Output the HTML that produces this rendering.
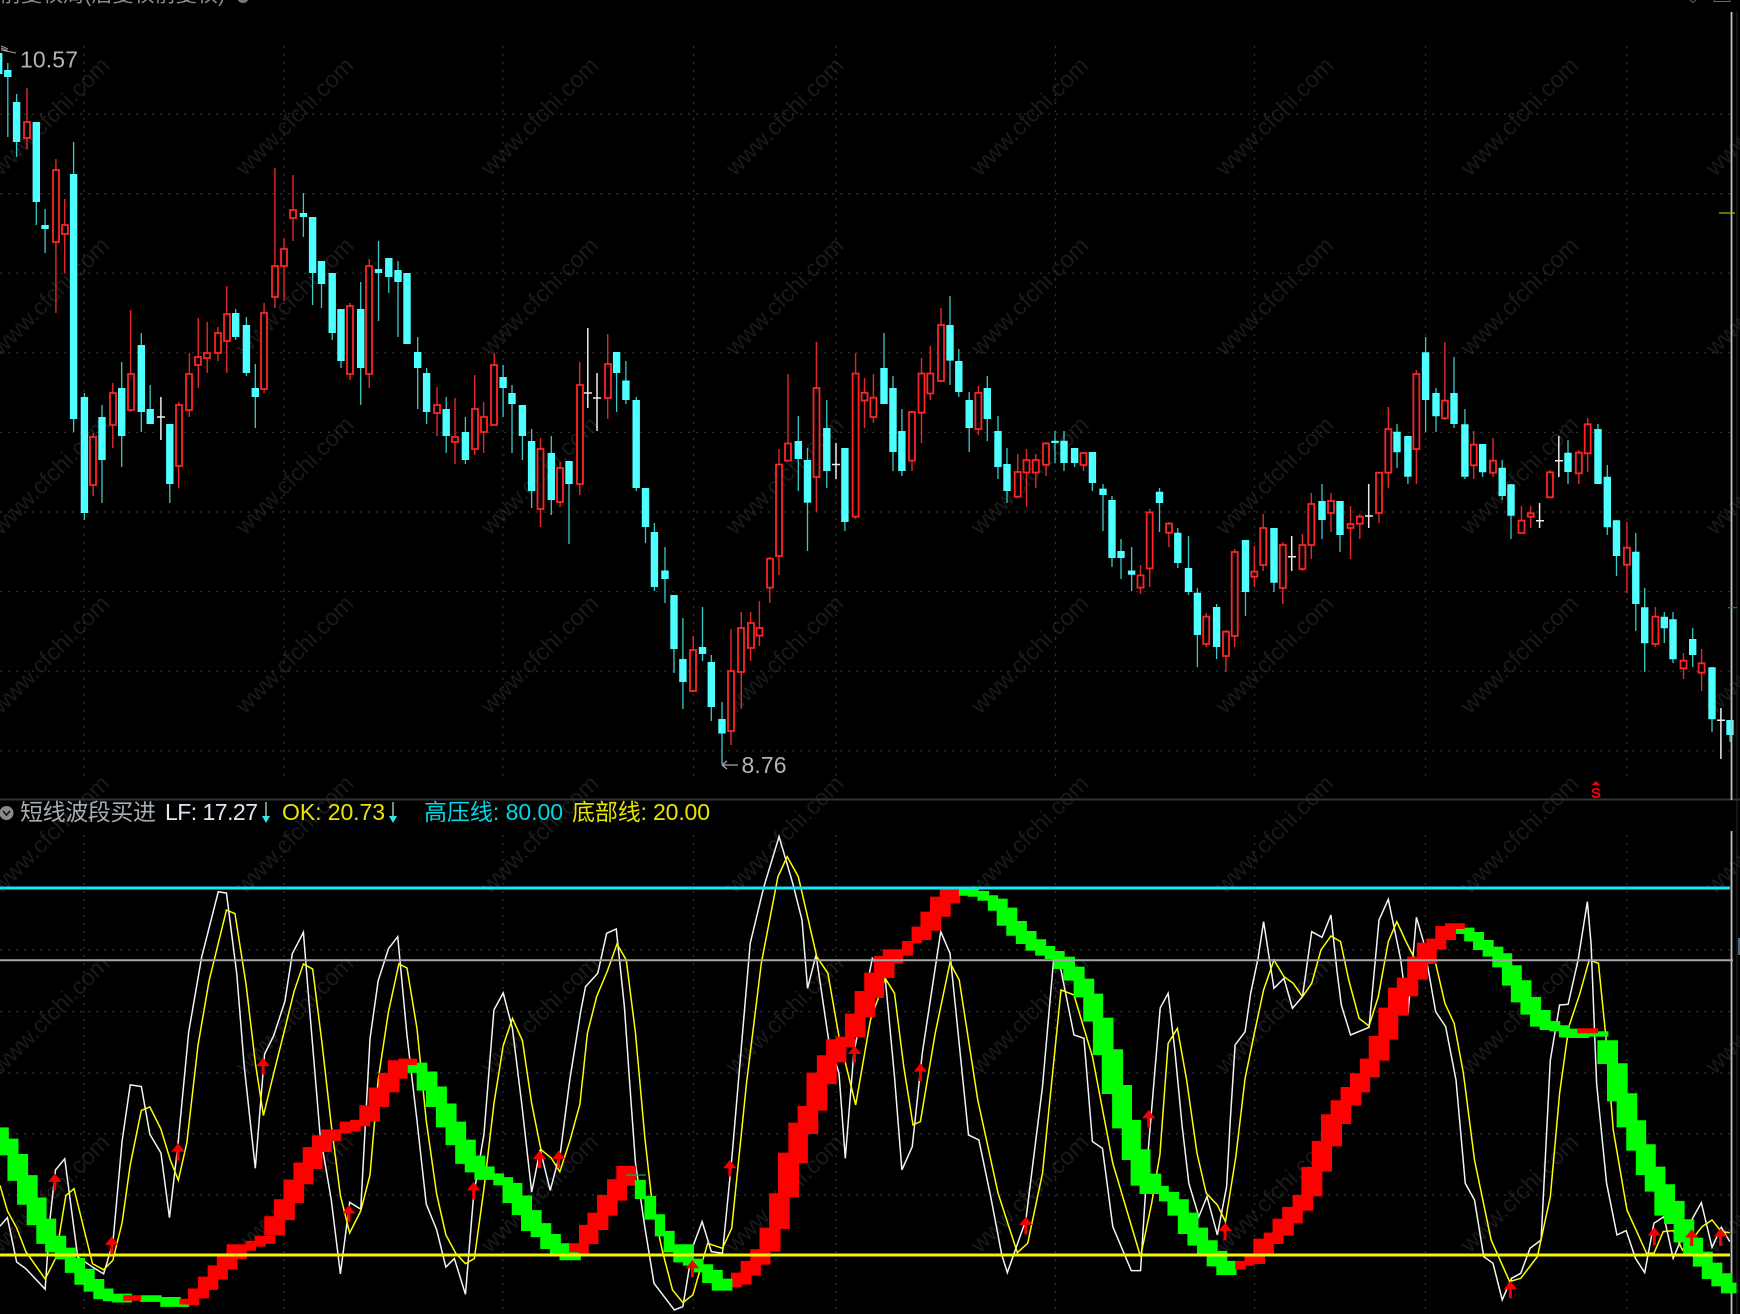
<!DOCTYPE html>
<html lang="zh"><head><meta charset="utf-8"><title>短线波段买进</title>
<style>html,body{margin:0;padding:0;background:#000;width:1740px;height:1314px;overflow:hidden}svg{display:block;filter:blur(.25px)}
.t{font-family:"Liberation Sans","Noto Sans CJK SC",sans-serif;font-size:23px}
.w text{font-family:"Liberation Sans",sans-serif;font-size:23.5px;fill:#1a1a1a;text-anchor:middle}
.l{fill:none;stroke-width:1.5;vector-effect:non-scaling-stroke;stroke-linejoin:miter}
.g{fill:#00ff00;stroke:#00ff00;stroke-width:1.4;vector-effect:non-scaling-stroke}
.r{fill:#ff0000;stroke:#ff0000;stroke-width:1.4;vector-effect:non-scaling-stroke}
</style></head><body>
<svg width="1740" height="1314" viewBox="0 0 1740 1314" xmlns="http://www.w3.org/2000/svg">
<rect width="1740" height="1314" fill="#000"/>
<!-- watermarks -->
<g class="w" transform="translate(4 4)">
<text transform="translate(52 118) rotate(-45)">www.cfchi.com</text><text transform="translate(296 118) rotate(-45)">www.cfchi.com</text><text transform="translate(541 118) rotate(-45)">www.cfchi.com</text><text transform="translate(786 118) rotate(-45)">www.cfchi.com</text><text transform="translate(1031 118) rotate(-45)">www.cfchi.com</text><text transform="translate(1276 118) rotate(-45)">www.cfchi.com</text><text transform="translate(1521 118) rotate(-45)">www.cfchi.com</text><text transform="translate(1766 118) rotate(-45)">www.cfchi.com</text>
<text transform="translate(52 298) rotate(-45)">www.cfchi.com</text><text transform="translate(296 298) rotate(-45)">www.cfchi.com</text><text transform="translate(541 298) rotate(-45)">www.cfchi.com</text><text transform="translate(786 298) rotate(-45)">www.cfchi.com</text><text transform="translate(1031 298) rotate(-45)">www.cfchi.com</text><text transform="translate(1276 298) rotate(-45)">www.cfchi.com</text><text transform="translate(1521 298) rotate(-45)">www.cfchi.com</text><text transform="translate(1766 298) rotate(-45)">www.cfchi.com</text>
<text transform="translate(52 477) rotate(-45)">www.cfchi.com</text><text transform="translate(296 477) rotate(-45)">www.cfchi.com</text><text transform="translate(541 477) rotate(-45)">www.cfchi.com</text><text transform="translate(786 477) rotate(-45)">www.cfchi.com</text><text transform="translate(1031 477) rotate(-45)">www.cfchi.com</text><text transform="translate(1276 477) rotate(-45)">www.cfchi.com</text><text transform="translate(1521 477) rotate(-45)">www.cfchi.com</text><text transform="translate(1766 477) rotate(-45)">www.cfchi.com</text>
<text transform="translate(52 656) rotate(-45)">www.cfchi.com</text><text transform="translate(296 656) rotate(-45)">www.cfchi.com</text><text transform="translate(541 656) rotate(-45)">www.cfchi.com</text><text transform="translate(786 656) rotate(-45)">www.cfchi.com</text><text transform="translate(1031 656) rotate(-45)">www.cfchi.com</text><text transform="translate(1276 656) rotate(-45)">www.cfchi.com</text><text transform="translate(1521 656) rotate(-45)">www.cfchi.com</text><text transform="translate(1766 656) rotate(-45)">www.cfchi.com</text>
<text transform="translate(52 836) rotate(-45)">www.cfchi.com</text><text transform="translate(296 836) rotate(-45)">www.cfchi.com</text><text transform="translate(541 836) rotate(-45)">www.cfchi.com</text><text transform="translate(786 836) rotate(-45)">www.cfchi.com</text><text transform="translate(1031 836) rotate(-45)">www.cfchi.com</text><text transform="translate(1276 836) rotate(-45)">www.cfchi.com</text><text transform="translate(1521 836) rotate(-45)">www.cfchi.com</text><text transform="translate(1766 836) rotate(-45)">www.cfchi.com</text>
<text transform="translate(52 1016) rotate(-45)">www.cfchi.com</text><text transform="translate(296 1016) rotate(-45)">www.cfchi.com</text><text transform="translate(541 1016) rotate(-45)">www.cfchi.com</text><text transform="translate(786 1016) rotate(-45)">www.cfchi.com</text><text transform="translate(1031 1016) rotate(-45)">www.cfchi.com</text><text transform="translate(1276 1016) rotate(-45)">www.cfchi.com</text><text transform="translate(1521 1016) rotate(-45)">www.cfchi.com</text><text transform="translate(1766 1016) rotate(-45)">www.cfchi.com</text>
<text transform="translate(52 1195) rotate(-45)">www.cfchi.com</text><text transform="translate(296 1195) rotate(-45)">www.cfchi.com</text><text transform="translate(541 1195) rotate(-45)">www.cfchi.com</text><text transform="translate(786 1195) rotate(-45)">www.cfchi.com</text><text transform="translate(1031 1195) rotate(-45)">www.cfchi.com</text><text transform="translate(1276 1195) rotate(-45)">www.cfchi.com</text><text transform="translate(1521 1195) rotate(-45)">www.cfchi.com</text><text transform="translate(1766 1195) rotate(-45)">www.cfchi.com</text>
</g>
<!-- grid -->
<g stroke="#323232" stroke-width="1.2" stroke-dasharray="2 6" fill="none">
<path d="M0 114H1731M0 193.6H1731M0 273.2H1731M0 352.8H1731M0 432.4H1731M0 512H1731M0 591.6H1731M0 671.2H1731M0 750.8H1731"/>
<path d="M84 46V780M284 46V780M503 46V780M693.5 46V780M836 46V780M1055.5 46V780M1254.5 46V780M1425.5 46V780M1627 46V780"/>
<path d="M0 950H1731M0 1011.6H1731M0 1073H1731M0 1134H1731M0 1195H1731"/>
<path d="M84 835V1314M284 835V1314M503 835V1314M693.5 835V1314M836 835V1314M1055.5 835V1314M1254.5 835V1314M1425.5 835V1314M1627 835V1314"/>
</g>
<!-- cropped title -->
<text class="t" x="0" y="1.5" fill="#8a8a8a" textLength="225" style="font-size:21px">前复权周(后复权前复权)</text>
<circle cx="243" cy="-3" r="6" fill="#777"/>
<path d="M1690 0l3 2.5 3-2.5" stroke="#666" fill="none"/><path d="M1714 0v1.5h16V0" stroke="#666" fill="none"/>
<!-- candles: cyan wicks -->
<path fill="none" stroke="#3cc8c8" stroke-width="1.3" d="M-1.3 47V60M7.8 63V137M16.6 94V157M36.3 122V225M45.1 209V253M73.6 142V432M84.4 393V520M102 405V503M121.7 362V467M141.3 333V432M150.2 385V424M169.8 424V503M235.7 309V340M246.4 317V376M255.3 364V428M303.4 193V237M312.6 217V305M321.5 261V308M332.2 273V340M341 309V368M360.7 282V405M378.5 241V321M388.8 258V293M398 261V337M417.7 337V409M426.6 368V424M446.2 397V453M465.4 417V464M503.1 365V417M512 385V453M522.4 405V460M531.6 429V508M551.3 436V515M569 461V544M616.6 352V412M625.9 361V404M636.2 397V491M645.5 488V543M654.4 523V591M665 547V603M674 595V673M682.9 618V709M702.5 607V661M711.3 655V721M722 702V764M798.3 416V491M807.5 448V551M826.8 400V488M844.9 448V531M884 333V404M893 376V471M901.9 409V476M950 296V385M958.8 349V397M969.2 392V452M987.3 376V441M998 416V479M1007 448V503M1055 431V463M1064 431V471M1074.6 448V467M1092.4 452V491M1103 484V531M1112 496V567M1121 539V579M1131.6 547V591M1159.5 488V532M1177.8 528V568M1188.5 536V595M1197.4 588V667M1216.6 604V659M1245.5 540V616M1274 528V592M1322 484V539M1340 501V552M1397 424V468M1407.9 436V484M1425.6 337V432M1436 388V432M1454 357V428M1464.9 409V479M1482.6 444V477M1502.2 460V500M1511 484V539M1568 440V484M1598 424V484M1607.3 465V535M1616.5 520V576M1635.8 533V631M1644.7 588V672M1664.3 612V643M1673 612V663M1692.7 628V667M1712 667V732M1730 720V742"/>
<!-- cyan bodies -->
<path fill="none" stroke="#4dffff" stroke-width="7.4" d="M-1.3 53V74M7.8 70V77M16.6 102V142M36.3 122V202M45.1 225V229M73.6 174V419M84.4 397V513M102 417V460M121.7 388V436M141.3 345V412M150.2 409V424M169.8 424V484M235.7 313V337M246.4 325V373M255.3 388V397M303.4 213V217M312.6 217V273M321.5 261V284M332.2 273V333M341 309V361M360.7 309V368M378.5 269V273M388.8 258V277M398 270V282M407 273V344M417.7 352V368M426.6 373V412M446.2 409V436M465.4 432V460M503.1 377V388M512 393V404M522.4 405V436M531.6 441V491M551.3 453V500M569 461V484M616.6 352V373M625.9 380.5V400M636.2 400V488M645.5 488V527M654.4 532V587M665 570.5V579M674 595V649M682.9 659V682M702.5 647V654M711.3 662V707M722 719V733.5M798.3 441V459M807.5 460V502.6M826.8 428V471M844.9 448V522M884 368V404M893 388V452M901.9 431V471M950 325V360.6M958.8 361V392M969.2 400V428M987.3 388V419M998 431V467M1007 464V491M1055 440.7V443M1064 440.7V463M1074.6 448V463M1092.4 452V483M1103 488.6V495M1112 500V558M1121 551V558M1131.6 570.5V574.7M1159.5 491.7V503M1177.8 532.7V563M1188.5 568V592M1197.4 592.7V635M1216.6 607V647M1245.5 540V592M1274 528V582.7M1322 501V520M1340 501V535M1397 431.7V452.3M1407.9 436V476.7M1425.6 352.3V400M1436 393V416.3M1454 393V424M1464.9 424.3V476.7M1482.6 444V472.3M1502.2 467.7V496M1511 484.3V515.7M1568 452.7V472M1598 429V484M1607.3 476.7V527.3M1616.5 520.3V556M1635.8 551.7V604M1644.7 607.3V643.3M1664.3 616.7V628.3M1673 619.3V659.3M1692.7 639V655M1712 667.3V719.3M1730 720V735"/>
<!-- red wicks -->
<path fill="none" stroke="#e02828" stroke-width="1.4" d="M27 88V149M55.9 159V313M64.7 199V273M93.2 433V496M112.8 383V448M130.6 310V412M178.7 402V488M189.4 353V417M198.3 318V388M207.2 322V373M217.9 327V361M226.8 286V373M264.1 303V393M274.9 168V308M284 238V301M293 175V241M350 303V380M369.2 259V388M437 387V436M455 398V464M474.7 375V455M483.6 402V453M494.3 353V425M540.5 438V527M560.1 462V507M579.7 362V495M607.7 334V419M693.2 636V692M731 629V745M741.3 612V709M750.6 612V661M759.4 601V646M769.8 557V603M779 449V575M788 374V461M816.4 342V512M855.6 353V519M864.5 378V428M873.4 374V423M912 411V471M921.5 358V443M930.3 346V400M941 308V382M978.4 386V435M1017.7 454V497M1026.5 449V507M1035.8 454V488M1046 442V476M1083.5 452V471M1140.5 565V594M1149.7 509V587M1168.9 522V547M1206.2 613V647M1225.9 630V672M1234.7 549V647M1254.3 546V587M1263.2 514V571M1282.8 542V604M1302.4 534V571M1311.3 493V559M1331 493V532M1350.5 506V559M1359.8 514V539M1379 473V523M1388.3 407V488M1416.4 370V484M1444.9 342V420M1473.7 431V479M1493 438V477M1521.5 506V533M1530.7 506V528M1550 470V497M1578.8 450V484M1587.7 418V472M1626.9 522V593M1655.4 607V647M1683.5 653V679M1701.6 649V691"/>
<!-- red bodies -->
<path fill="#000" stroke="#ff2424" stroke-width="1.8" d="M24 122h6V138h-6zM53 170h6V242h-6zM62 225h6V234h-6zM90 437h6V485h-6zM110 393h6V425h-6zM128 374h6V410h-6zM176 405h6V466h-6zM186 374h6V410h-6zM195 357h6V365h-6zM204 353h6V358h-6zM215 333h6V353h-6zM224 314h6V341h-6zM261 313h6V389h-6zM272 266h6V297h-6zM281 249h6V266h-6zM290 210h6V218h-6zM347 306h6V374h-6zM366 266h6V374h-6zM434 405h6V413h-6zM452 437h6V442h-6zM472 409h6V449h-6zM481 417h6V432h-6zM491 365h6V425h-6zM537.5 449h6V509h-6zM557 468h6V502h-6zM577 385h6V484h-6zM605 364h6V398h-6zM690 650h6V691h-6zM728 671h6V731h-6zM738 628h6V672h-6zM748 623h6V648h-6zM756.5 628h6V635.6h-6zM767 558.6h6V587.6h-6zM776 464.5h6V556h-6zM785 443.5h6V460.6h-6zM813.5 388h6V477h-6zM852.6 373.5h6V516.6h-6zM861.5 392.8h6V400.5h-6zM870.4 397.7h6V417h-6zM909 412h6V460.6h-6zM918.5 373.5h6V412.7h-6zM927.3 373.5h6V393.5h-6zM938 325h6V381h-6zM975.4 392.8h6V429h-6zM1014.7 472h6V496.7h-6zM1023.5 460h6V472.5h-6zM1032.8 460h6V472.5h-6zM1043 443.5h6V464.8h-6zM1080.5 453h6V465h-6zM1137.5 575.4h6V587.6h-6zM1146.7 512.4h6V568.4h-6zM1166 523.7h6V532.7h-6zM1203.2 616.7h6V644h-6zM1223 631.7h6V656h-6zM1231.7 552h6V636h-6zM1251.3 571.7h6V576.7h-6zM1260.2 528h6V565h-6zM1279.8 545h6V588h-6zM1299.4 545h6V569h-6zM1308.3 504h6V545h-6zM1328 501h6V513h-6zM1347.5 524h6V528h-6zM1356.8 516.7h6V523.7h-6zM1376 472.7h6V513h-6zM1385.3 429h6V472.7h-6zM1413.4 374h6V449h-6zM1441.9 400.7h6V418.3h-6zM1470.7 444.7h6V465.3h-6zM1490 460.7h6V472.7h-6zM1518.5 520.7h6V533h-6zM1527.7 513.3h6V516.7h-6zM1547 472.3h6V497.3h-6zM1575.8 452.7h6V473.3h-6zM1584.7 424.3h6V453.3h-6zM1623.9 547.7h6V564.7h-6zM1652.4 616.7h6V644h-6zM1680.5 660.7h6V668.3h-6zM1698.6 663.3h6V672.7h-6z"/>
<!-- white doji -->
<path fill="none" stroke="#ececec" stroke-width="1.5" d="M160.9 397V440M157 417h8M587.8 328V408M584 393h8M597 373V431M593 398h8M836 443V479M832 464.5h8M1291.7 536V571M1288 556.7h8M1368.7 484V528M1365 516h8M1539.6 503V528M1536 520.7h8M1558.8 436V477M1555 460.7h8M1720.9 708V759M1717 720.3h8"/>
<!-- pane separators / axis -->
<path d="M0 799.5H1740" stroke="#333" stroke-width="2"/>
<path d="M1731.5 12V800M1731.5 831V1314" stroke="#bdbdbd" stroke-width="1.8"/>
<path d="M1737 12V1314" stroke="#2a2a2a" stroke-width="1"/>
<path d="M1719 213H1735" stroke="#b8b800" stroke-width="1.2"/><path d="M1728 607.7H1737" stroke="#1a8a3a" stroke-width="1.2"/>
<rect x="1738" y="938" width="2" height="17" fill="#567"/>
<!-- S marker -->
<path d="M1595.8 781l4 4h-8z" fill="#ff0000"/><text x="1591" y="798" fill="#ff0000" style="font:bold 15px 'Liberation Sans',sans-serif">S</text>
<!-- labels -->
<path d="M1 50L16 53M1 46L8 49M1 48L8 51" stroke="#a0a0a0" stroke-width="1" fill="none"/>
<text class="t" x="20" y="67.5" fill="#adb5bb" textLength="58">10.57</text>
<path d="M722 765H738M722 765l5-4M722 765l5 4" stroke="#a8a8a8" stroke-width="1.3" fill="none"/>
<text class="t" x="741.5" y="773" fill="#adb5bb" textLength="45">8.76</text>
<circle cx="6.5" cy="813" r="7" fill="#8a8a8a"/><path d="M3 811l3.5 4 3.5-4" stroke="#111" stroke-width="1.6" fill="none"/>
<text class="t" x="20" y="820" fill="#a6aeb5" textLength="136">短线波段买进</text>
<text class="t" x="165" y="820" fill="#dfe6ee" textLength="93">LF: 17.27</text>
<path d="M266 802V820" stroke="#b8f0f0" stroke-width="1.2"/><path d="M262 816h8l-4 7z" fill="#2fe8e8"/>
<text class="t" x="282" y="820" fill="#e6e600" textLength="103">OK: 20.73</text>
<path d="M393 802V820" stroke="#b8f0f0" stroke-width="1.2"/><path d="M389 816h8l-4 7z" fill="#2fe8e8"/>
<text class="t" x="424" y="820" fill="#00d8e8" textLength="139">高压线: 80.00</text>
<text class="t" x="572" y="820" fill="#e6e600" textLength="138">底部线: 20.00</text>
<!-- oscillator lines -->
<g transform="translate(0 780) scale(.37 .3406)">
<polyline class="l" stroke="#f4f4f4" points="0,1310 20,1285 45,1415 70,1435 122,1495 135,1290 150,1145 175,1112 210,1400 250,1430 280,1450 305,1360 330,1060 352,895 382,900 405,1040 435,1095 458,1285 480,1080 510,740 545,520 590,328 612,332 640,570 660,840 690,1140 715,805 740,750 770,650 790,510 820,447 835,650 865,1040 895,1230 920,1450 945,1240 975,1260 1000,760 1022,590 1050,495 1075,460 1100,750 1127,1000 1152,1245 1180,1320 1205,1430 1228,1405 1258,1510 1280,1220 1308,1040 1335,675 1360,625 1385,730 1410,950 1437,1210 1460,1085 1487,1205 1515,1090 1540,880 1568,690"/>
<polyline class="l" stroke="#ffff00" points="0,1190 20,1265 45,1315 70,1385 122,1465 150,1405 178,1220 200,1200 250,1420 280,1438 305,1410 330,1300 352,1130 382,970 405,960 435,1025 460,1115 482,1175 505,1065 535,780 565,590 612,382 635,392 665,600 690,830 712,985 740,860 770,730 795,620 820,540 845,555 870,770 895,1010 920,1220 945,1330 975,1265 1000,1160 1022,880 1050,680 1078,540 1100,552 1127,730 1152,1000 1180,1215 1205,1335 1232,1390 1258,1420 1282,1405 1308,1200 1335,950 1360,780 1385,700 1412,765 1437,950 1462,1085 1490,1110 1513,1150 1540,1060 1568,949"/>
</g>
<g transform="translate(580 820) scale(.37 .3333)">
<polyline class="l" stroke="#f4f4f4" points="0,585 15,500 48,460 72,340 98,327 120,560 135,800 150,1030 175,1220 200,1390 255,1470 278,1460 305,1280 330,1205 355,1295 385,1300 410,1020 460,370 497,200 538,50 575,190 600,300 615,505 638,405 672,660 700,760 717,1015 740,700 790,415 825,475 850,770 870,1050 898,980 925,700 975,335 1000,400 1022,640 1050,945 1078,960 1110,1130 1140,1305 1155,1358 1205,1200 1250,800 1280,420 1300,450 1335,645 1362,655 1385,965 1412,985 1440,1220 1490,1352 1515,1352 1535,1000 1568,565"/>
<polyline class="l" stroke="#ffff00" points="0,850 20,640 45,530 75,450 100,372 125,420 150,640 175,950 195,1150 222,1290 250,1410 278,1448 305,1425 345,1270 385,1285 410,1225 450,790 490,430 535,170 560,110 590,170 640,410 670,460 700,650 745,855 785,600 825,475 850,520 875,740 900,915 920,905 960,640 1000,428 1025,480 1075,840 1130,1120 1182,1298 1210,1270 1250,1060 1300,510 1335,525 1385,710 1440,1030 1515,1310 1545,1150 1568,1000"/>
</g>
<g transform="translate(1160 820) scale(.37 .3333)">
<polyline class="l" stroke="#f4f4f4" points="0,565 22,520 40,690 60,920 78,1090 105,1190 127,1130 155,1245 180,1100 190,900 203,675 230,635 245,520 265,415 280,305 308,505 335,475 358,565 385,530 410,335 438,352 462,285 478,450 490,555 515,645 565,622 592,300 617,238 650,415 670,585 693,292 712,365 722,430 745,575 772,620 800,780 825,1090 850,1140 875,1310 900,1330 925,1440 950,1375 975,1360 1000,1285 1030,1260 1055,720 1080,555 1103,553 1130,420 1155,245 1165,370 1180,790 1207,1090 1235,1245 1260,1232 1285,1315 1310,1358 1335,1210 1362,1190 1387,1315 1412,1250 1463,1148 1492,1282 1517,1222 1540,1265"/>
<polyline class="l" stroke="#ffff00" points="0,1000 22,670 47,625 72,780 100,1000 125,1120 155,1155 177,1205 205,1010 230,775 255,640 280,510 308,420 335,470 360,490 385,530 410,490 435,390 462,348 488,365 510,480 538,595 565,618 590,530 617,365 640,305 665,365 690,420 745,430 770,550 795,610 820,760 850,1020 895,1260 945,1385 975,1375 1020,1310 1055,1130 1080,820 1105,620 1135,520 1160,420 1185,430 1205,650 1225,930 1262,1170 1315,1300 1335,1300 1360,1235 1387,1232 1412,1290 1437,1260 1465,1220 1492,1200 1517,1235 1540,1238"/>
</g>
<!-- band -->
<g transform="translate(0 780) scale(.37 .3406)">
<path class="g" d="M-5 1022H22V1100H-5zM22 1055H48V1175H22zM48 1100H74V1245H48zM74 1162H100V1305H74zM100 1228H124V1360H100zM124 1290H150V1385H124zM150 1340H177V1405H150zM177 1375H203V1445H177zM203 1405H228V1480H203zM228 1437H254V1500H228zM254 1467H280V1522H254zM280 1495H305V1528H280zM305 1510H355V1532H305zM380 1515H435V1530H380zM435 1520H487V1545H435zM487 1535H510V1545H487zM1100 832H1128V858H1100zM1128 832H1153V910H1128zM1153 858H1180V958H1153zM1180 902H1206V1018H1180zM1206 952H1232V1070H1206zM1232 1005H1258V1125H1232zM1258 1058H1284V1150H1258zM1284 1105H1310V1172H1284zM1310 1137H1335V1172H1310zM1335 1157H1360V1188H1335zM1360 1168H1385V1240H1360zM1385 1185H1410V1275H1385zM1410 1222H1436V1322H1410zM1436 1265H1462V1340H1436zM1462 1303H1488V1375H1462zM1488 1335H1514V1395H1488zM1514 1362H1540V1408H1514zM1540 1385H1568V1408H1540z"/>
<path class="r" d="M335 1515H380V1527H335zM487 1525H510V1538H487zM510 1495H537V1540H510zM537 1460H563V1520H537zM563 1427H588V1495H563zM588 1400H614V1465H588zM614 1365H640V1435H614zM640 1365H665V1405H640zM665 1355H690V1380H665zM690 1340H716V1368H690zM716 1340H742V1360H716zM716 1283H742V1335H716zM742 1233H768V1335H742zM768 1175H795V1290H768zM795 1125H820V1240H795zM820 1080H845V1185H820zM845 1045H870V1140H845zM870 1028H895V1090H870zM895 1028H920V1058H895zM920 1005H948V1035H920zM948 1000H973V1030H948zM973 957H998V1015H973zM998 905H1025V1000H998zM1025 862H1050V958H1025zM1050 825H1078V915H1050zM1078 820H1100V875H1078zM1100 820H1125V835H1100zM1540 1362H1568V1385H1540z"/>
</g>
<g transform="translate(580 820) scale(.37 .3333)">
<path class="r" d="M-1 1217H22V1300H-1zM22 1180H48V1270H22zM48 1127H75V1228H48zM75 1080H100V1185H75zM100 1040H125V1140H100zM125 1040H150V1095H125zM410 1360H436V1400H410zM436 1325H462V1392H436zM462 1290H487V1365H462zM487 1225H513V1332H487zM513 1122H540V1293H513zM537 1000H565V1225H537zM565 910H590V1130H565zM590 860H614V1028H590zM614 760H642V940H614zM642 708H667V870H642zM667 660H692V790H667zM692 652H718V725H692zM718 652H742V680H718zM718 583H744V650H718zM744 515H770V650H744zM770 460H796V590H770zM796 410H820V532H796zM820 390H848V472H820zM848 390H872V428H848zM872 365H898V405H872zM898 322H922V368H898zM922 277H948V358H922zM948 232H974V330H948zM974 208H1000V288H974zM1000 208H1026V248H1000z"/>
<path class="g" d="M150 1082H176V1135H150zM176 1130H204V1197H176zM204 1185H228V1247H204zM228 1235H254V1295H228zM254 1275H280V1325H254zM280 1275H306V1335H280zM306 1318H332V1355H306zM332 1335H358V1387H332zM358 1352H384V1410H358zM384 1378H410V1410H384zM1026 208H1050V225H1026zM1050 208H1076V228H1050zM1076 215H1104V240H1076zM1104 228H1128V270H1104zM1128 238H1154V315H1128zM1154 265H1180V345H1154zM1180 305H1206V370H1180zM1206 335H1232V390H1206zM1232 360H1258V405H1232zM1258 380H1282V415H1258zM1282 395H1308V445H1282zM1308 412H1336V480H1308zM1336 442H1362V530H1336zM1362 478H1388V603H1362zM1388 523H1412V703H1388zM1412 595H1440V820H1412zM1440 690H1466V923H1440zM1466 797H1490V1018H1466zM1490 902H1514V1095H1490zM1514 990H1540V1120H1514zM1540 1063H1569V1120H1540z"/>
<path d="M125 1065H178" stroke="#18b030" stroke-width="1.2" vector-effect="non-scaling-stroke"/>
</g>
<g transform="translate(1160 820) scale(.37 .3333)">
<path class="g" d="M-1 1100H22V1142H-1zM22 1118H50V1185H22zM50 1140H76V1240H50zM76 1180H102V1275H76zM102 1225H128V1305H102zM128 1263H154V1337H128zM154 1295H180V1363H154zM180 1325H205V1363H180zM798 325H824V340H798zM824 325H848V362H824zM848 338H874V388H848zM874 362H900V408H874zM900 382H926V440H900zM926 402H950V495H926zM950 438H976V545H950zM976 483H1002V582H976zM1002 533H1028V618H1002zM1028 572H1054V628H1028zM1054 605H1080V632H1054zM1080 618H1106V650H1080zM1106 628H1158V652H1106zM1158 636H1210V648H1158zM1184 663H1210V730H1184zM1210 663H1236V842H1210zM1236 732H1262V920H1236zM1262 822H1288V990H1262zM1288 903H1312V1063H1288zM1312 975H1338V1113H1312zM1338 1042H1364V1185H1338zM1364 1095H1390V1210H1364zM1390 1145H1416V1265H1390zM1416 1200H1442V1300H1416zM1442 1255H1466V1338H1442zM1466 1297H1492V1375H1466zM1492 1330H1518V1397H1492zM1518 1362H1545V1418H1518zM1545 1390H1556V1418H1545z"/>
<path class="r" d="M205 1325H230V1347H205zM230 1310H254V1335H230zM254 1258H282V1330H254zM282 1240H306V1302H282zM306 1198H332V1270H306zM332 1163H360V1245H332zM360 1127H384V1208H360zM384 1043H412V1170H384zM412 965H437V1127H412zM437 885H463V1053H437zM463 843H490V977H463zM490 803H515V910H490zM515 762H542V855H515zM542 718H566V815H542zM566 650H592V770H566zM592 565H618V720H592zM618 505H642V657H618zM642 475H670V585H642zM670 412H696V527H670zM696 370H722V477H696zM722 358H746V430H722zM746 320H772V387H746zM772 312H798V358H772zM798 312H822V325H798zM1130 627H1182V638H1130z"/>
</g>
<!-- horizontal levels -->
<path d="M0 888H1730" stroke="#14e4f4" stroke-width="3"/>
<path d="M0 960.3H1733" stroke="#a6a6a6" stroke-width="2"/>
<path d="M0 1255H1730" stroke="#f6f600" stroke-width="3"/>
<!-- buy arrows -->
<g fill="#f40000">
<g transform="translate(0 780) scale(.37 .3406)">
<path d="M148 1155l18 25h-14V1205h-8V1180h-14zM302 1340l18 25h-14V1392h-8V1365h-14zM481 1066l18 25h-14V1117h-8V1091h-14zM711 815l18 25h-14V865h-8V840h-14zM943 1248l18 25h-14V1298h-8V1273h-14zM1280 1180l18 25h-14V1232h-8V1205h-14zM1458 1088l18 25h-14V1140h-8V1113h-14zM1510 1088l18 25h-14V1140h-8V1113h-14z"/>
</g>
<g transform="translate(580 820) scale(.37 .3333)">
<path d="M405 1020l18 25h-14V1070h-8V1045h-14zM304 1320l18 25h-14V1372h-8V1345h-14zM742 677l18 25h-14V728h-8V702h-14zM920 730l18 25h-14V783h-8V755h-14zM1205 1190l18 25h-14V1243h-8V1215h-14zM1537 870l18 25h-14V922h-8V895h-14z"/>
</g>
<g transform="translate(1160 820) scale(.37 .3333)">
<path d="M176 1208l18 25h-14V1260h-8V1233h-14zM947 1383l18 25h-14V1435h-8V1408h-14zM1336 1222l18 25h-14V1275h-8V1247h-14zM1437 1228l18 25h-14V1278h-8V1253h-14zM1515 1225l18 25h-14V1278h-8V1250h-14z"/>
</g>
</g>
</svg>
</body></html>
